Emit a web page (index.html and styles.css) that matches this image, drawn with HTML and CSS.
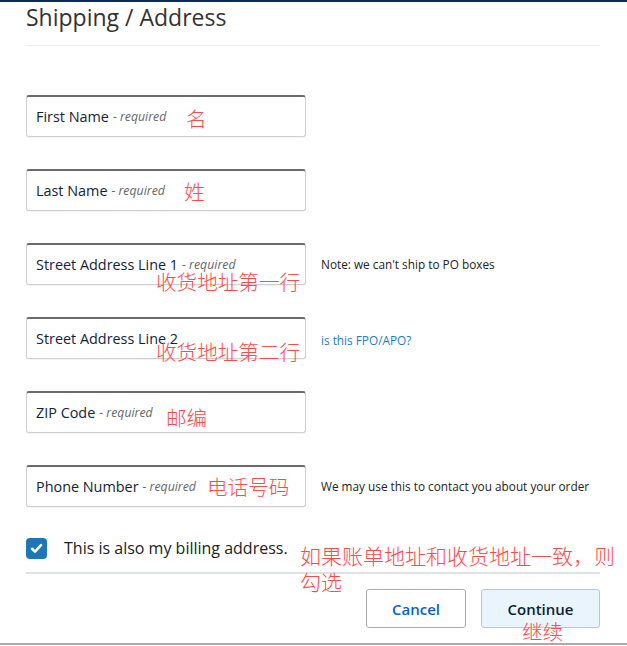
FILE: index.html
```html
<!DOCTYPE html>
<html lang="en">
<head>
    <meta charset="UTF-8">
    <title>Shipping / Address</title>
    <link rel="stylesheet" href="styles.css">
</head>
<body>
    <div class="page">
        <h2 class="title">Shipping / Address</h2>

        <form class="address-form">
            <div class="row">
                <div class="field">First Name <em>- required</em></div>
                <span class="note-cn cn-first">名</span>
            </div>

            <div class="row">
                <div class="field">Last Name <em>- required</em></div>
                <span class="note-cn cn-last">姓</span>
            </div>

            <div class="row">
                <div class="field">Street Address Line 1 <em>- required</em></div>
                <span class="hint">Note: we can't ship to PO boxes</span>
                <span class="note-cn cn-street1">收货地址第一行</span>
            </div>

            <div class="row">
                <div class="field">Street Address Line 2</div>
                <a class="hint hint-link" href="#">is this FPO/APO?</a>
                <span class="note-cn cn-street2">收货地址第二行</span>
            </div>

            <div class="row">
                <div class="field">ZIP Code <em>- required</em></div>
                <span class="note-cn cn-zip">邮编</span>
            </div>

            <div class="row">
                <div class="field">Phone Number <em>- required</em></div>
                <span class="hint">We may use this to contact you about your order</span>
                <span class="note-cn cn-phone">电话号码</span>
            </div>

            <label class="billing">
                <span class="checkbox">
                    <svg width="13" height="13" viewBox="0 0 13 13"><path d="M2 6.8 L5 9.6 L11 3.2" fill="none" stroke="#fff" stroke-width="2.6" stroke-linecap="round" stroke-linejoin="round"/></svg>
                </span>
                This is also my billing address.
                <span class="note-cn cn-billing">如果账单地址和收货地址一致，则<br>勾选</span>
            </label>

            <div class="actions">
                <button type="button" class="btn btn-cancel">Cancel</button>
                <button type="submit" class="btn btn-continue">Continue
                    <span class="note-cn cn-continue">继续</span>
                </button>
            </div>
        </form>
    </div>
    <div class="bottom-rule"></div>
</body>
</html>
```

FILE: styles.css
```css
body {
    margin: 0;
    font-family: "Open Sans", "Liberation Sans", sans-serif;
    background-color: #fff;
    border-top: 2px solid #0b2a55;
}

.page {
    width: 574px;
    padding: 0 27px 0 26px;
}

.title {
    margin: 0;
    padding-bottom: 13px;
    font-size: 23px;
    font-weight: 400;
    line-height: 30px;
    color: #333;
    border-bottom: 1px solid #eee;
}

.address-form {
    margin: 49px 0 0;
}

.row {
    position: relative;
    display: flex;
    align-items: center;
    margin-bottom: 32px;
}

.field {
    box-sizing: border-box;
    width: 280px;
    height: 42px;
    padding: 0 9px;
    display: flex;
    align-items: center;
    gap: 4px;
    font-size: 14.4px;
    color: #13233a;
    border: 1px solid #cfcfcf;
    border-top: 2px solid #6b6b6b;
    border-radius: 3px;
    box-shadow: 0 1px 1px rgba(0,0,0,0.06);
}

.field em {
    font-size: 12.3px;
    color: #666;
}

.hint {
    margin-left: 15px;
    font-size: 11.8px;
    color: #222;
}

.hint-link {
    color: #1a7ad8;
    text-decoration: none;
    margin-top: 4px;
}

.note-cn {
    position: absolute;
    font-family: "Noto Sans CJK SC", sans-serif;
    font-size: 20.6px;
    font-weight: 300;
    line-height: 1;
    color: #ff4a4a;
    white-space: nowrap;
}

.cn-first { left: 160px; top: 13px; }
.cn-last { left: 158px; top: 12px; }
.cn-street1 { left: 130px; top: 28px; }
.cn-street2 { left: 130px; top: 24px; }
.cn-zip { left: 140px; top: 16px; }
.cn-phone { left: 181px; top: 11px; }

.billing {
    position: relative;
    display: flex;
    align-items: center;
    gap: 17px;
    margin-top: -2px;
    padding-bottom: 13px;
    font-size: 16px;
    color: #222;
    border-bottom: 2px solid #dde2e7;
}

.checkbox {
    width: 21px;
    height: 21px;
    border-radius: 4px;
    background-color: #1d77b7;
    display: flex;
    align-items: center;
    justify-content: center;
}

.cn-billing {
    left: 274px;
    top: 5px;
    font-size: 21px;
    line-height: 26px;
}

.actions {
    display: flex;
    justify-content: flex-end;
    gap: 15px;
    margin-top: 15px;
}

.btn {
    position: relative;
    height: 39px;
    font-family: "Open Sans", "Liberation Sans", sans-serif;
    font-size: 15px;
    font-weight: 600;
    border-radius: 3px;
    cursor: pointer;
}

.btn-cancel {
    width: 100px;
    background-color: #fff;
    color: #0b5fc8;
    border: 1px solid #aaa;
}

.btn-continue {
    width: 119px;
    background-color: #e9f4fd;
    color: #0f1e33;
    border: 1px solid #b4c6d8;
}

.cn-continue {
    left: 40px;
    top: 31px;
    font-weight: 300;
}

.bottom-rule {
    margin-top: 15px;
    height: 2px;
    background-color: #aaa;
}
```
